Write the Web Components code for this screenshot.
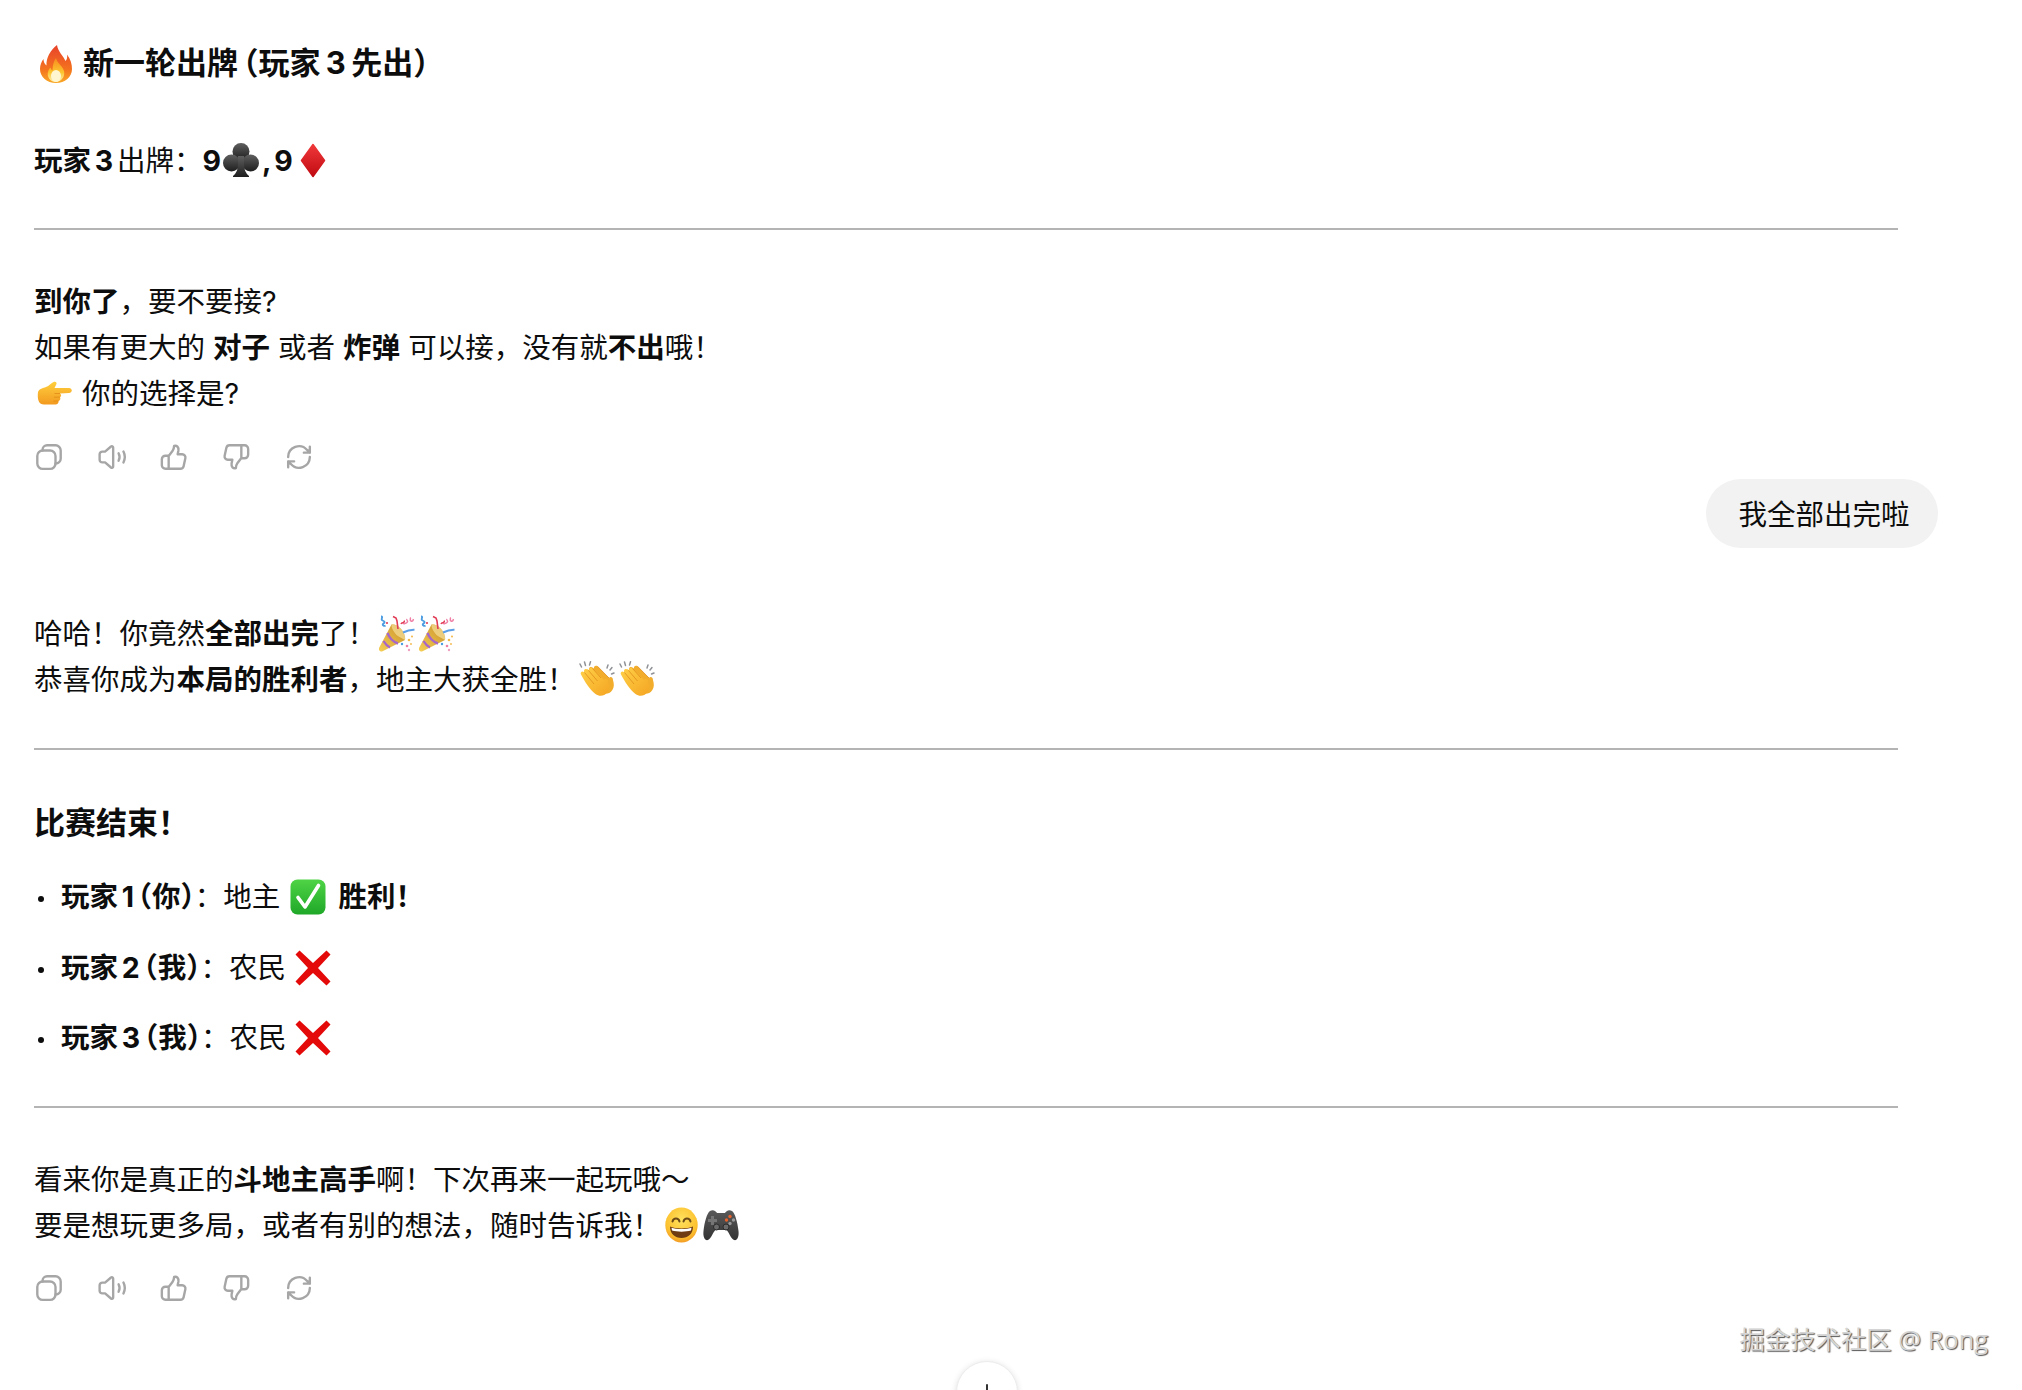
<!DOCTYPE html>
<html lang="zh">
<head>
<meta charset="utf-8">
<title>斗地主</title>
<style>
html, body { margin: 0; padding: 0; background: #fff; }
</style>
</head>
<body>
<chat-app>
  <chat-line kind="title" style="word-spacing:-2px"><emo-ji name="fire" w="32" h="38" ml="6" mr="11"></emo-ji>新一轮出牌<half-w style="margin-left:5px">（</half-w>玩家 3 先出<half-w>）</half-w></chat-line>
  <chat-line tight style="--mt:51px"><b>玩家 3 </b>出牌：<b>9</b><emo-ji name="club" ml="2" mr="3"></emo-ji><b>, 9 </b><emo-ji name="diamond" w="26" h="35" ml="3"></emo-ji></chat-line>
  <chat-rule style="--mt:45px"></chat-rule>
  <chat-line style="--mt:48px"><b>到你了</b>，要不要接?</chat-line>
  <chat-line>如果有更大的 <b>对子</b> 或者 <b>炸弹</b> 可以接，没有就<b>不出</b>哦！</chat-line>
  <chat-line><emo-ji name="point" w="36" h="24" ml="2" mr="10"></emo-ji>你的选择是?</chat-line>
  <action-bar style="--mt:26px"></action-bar>
  <user-bubble style="--mt:7px">我全部出完啦</user-bubble>
  <chat-line style="--mt:62px">哈哈！你竟然<b>全部出完</b>了！<emo-ji name="party" w="37" h="37" ml="2" mr="3"></emo-ji><emo-ji name="party" w="37" h="37"></emo-ji></chat-line>
  <chat-line>恭喜你成为<b>本局的胜利者</b>，地主大获全胜！<emo-ji name="clap" ml="2" mr="4"></emo-ji><emo-ji name="clap"></emo-ji></chat-line>
  <chat-rule style="--mt:46px"></chat-rule>
  <chat-line kind="title" style="--mt:50px">比赛结束！</chat-line>
  <chat-item style="--mt:28px"><b>玩家 1 <half-w>（</half-w>你<half-w>）</half-w></b>：地主 <emo-ji name="check" ml="5" mr="12"></emo-ji><b>胜利！</b></chat-item>
  <chat-item style="--mt:24.5px"><b>玩家 2 <half-w>（</half-w>我<half-w>）</half-w></b>：农民 <emo-ji name="cross" ml="4"></emo-ji></chat-item>
  <chat-item style="--mt:24.5px"><b>玩家 3 <half-w>（</half-w>我<half-w>）</half-w></b>：农民 <emo-ji name="cross" ml="4"></emo-ji></chat-item>
  <chat-rule style="--mt:45px"></chat-rule>
  <chat-line style="--mt:48px">看来你是真正的<b>斗地主高手</b>啊！下次再来一起玩哦～</chat-line>
  <chat-line>要是想玩更多局，或者有别的想法，随时告诉我！<emo-ji name="grin" w="33" h="36" ml="4" mr="5"></emo-ji><emo-ji name="pad" w="36" h="36"></emo-ji></chat-line>
  <action-bar style="--mt:25px"></action-bar>
  <scroll-button></scroll-button>
  <water-mark>掘金技术社区 @ Rong</water-mark>
</chat-app>

<script>
// emoji drawn by hand, no emoji font in the sandbox
const HAND = 'M3 13.500C1.800 11.500 4 9.500 6 11L6.500 11.500C5 9 7.500 7 9.500 8.500L11 9.500C10.500 7.500 12.500 6 14.500 7.300L26 19C27.500 17 30 18.500 30 21C31 25 31.500 28 29 31.500C26.500 35 21.500 36 17.500 33C11 28 6.500 20 3 13.500Z';
const EMOJI = {
  fire: `<svg viewBox="0 0 32 38"><defs>
      <linearGradient id="a" x1="0" y1="0" x2="0" y2="1"><stop offset="0" stop-color="#e8412a"/><stop offset=".65" stop-color="#f4741e"/><stop offset="1" stop-color="#f9a825"/></linearGradient>
      <linearGradient id="b" x1="0" y1="0" x2="0" y2="1"><stop offset="0" stop-color="#f78a1e"/><stop offset=".6" stop-color="#fcc52f"/><stop offset="1" stop-color="#fff3b0"/></linearGradient></defs>
      <path fill="url(#a)" d="M17 0C18 7 23 10 25.500 16C27 14.500 27.500 12 27 9.500C30.500 14 32 19 32 24C32 32 25 38 16 38C7 38 0 32 0 24C0 20 1.500 16.500 3.500 14C3.500 17 4.500 19 6.500 20.500C6 13 10.500 5 17 0Z"/>
      <path fill="url(#b)" d="M16 13C17 18 22.500 21 24 26C25.500 31.500 21 37 16 37C10.500 37 6.500 32 8 27C8.500 25 9.500 23.500 10.500 22.500C11 24 11.500 25 12.500 25.500C12.500 21 13.500 16.500 16 13Z"/>
      <ellipse cx="16" cy="31" rx="5" ry="6" fill="#fff6cf"/></svg>`,
  club: `<svg viewBox="0 0 36 36"><defs><linearGradient id="a" x1="0" y1="0" x2="0" y2="1"><stop offset="0" stop-color="#5f5f5f"/><stop offset="1" stop-color="#1e1e1e"/></linearGradient></defs>
      <g fill="url(#a)"><circle cx="18" cy="9.500" r="8.500"/><circle cx="8.500" cy="21" r="8.500"/><circle cx="27.500" cy="21" r="8.500"/><path d="M15 14h6v8q0 8 5 12v1H10v-1q5-4 5-12z"/></g></svg>`,
  diamond: `<svg viewBox="0 0 26 35"><defs><linearGradient id="a" x1="0" y1="0" x2="0" y2="1"><stop offset="0" stop-color="#f0383a"/><stop offset="1" stop-color="#c00b12"/></linearGradient></defs>
      <path fill="url(#a)" stroke="url(#a)" stroke-width="1.500" stroke-linejoin="round" d="M13 1.500L24.500 17.500L13 33.500L1.500 17.500Z"/></svg>`,
  point: `<svg viewBox="0 0 36 24"><defs><linearGradient id="a" x1="0" y1="0" x2="0" y2="1"><stop offset="0" stop-color="#ffcf3e"/><stop offset="1" stop-color="#f29a1f"/></linearGradient></defs>
      <path fill="url(#a)" d="M2 11C3 8 7 7 10 6C13 5 15 2 18 .8C20 .2 21.500 2 20 4C19.500 5 19 6 18.500 7L33 7C36.800 7.500 36.800 11.500 33 12L24 12.500C25.500 13.500 25.500 15.500 24 16C25 17.500 24 19.500 22.500 20C22.800 22 21.500 23.500 19.500 23.500L8 23.500C3 23.500 1 19 2 11Z"/>
      <path fill="none" stroke="#e08a18" stroke-width=".8" d="M18.500 12.500H24M18 16.200H24M17.500 20H22.500"/></svg>`,
  party: `<svg viewBox="0 0 37 37"><defs><linearGradient id="a" x1="0" y1="1" x2="1" y2="0"><stop offset="0" stop-color="#f6cf55"/><stop offset="1" stop-color="#c9912a"/></linearGradient></defs>
      <path fill="url(#a)" d="M1 33C.5 35.500 2 37 4 36.500L27 25C28 21 25 15 21 12C18.500 10 15.500 9 13.500 9.500Z"/>
      <path fill="#fff2b8" opacity=".55" d="M13.500 9.500C13 13 17 20 21.500 22L27 25C28 21 25 15 21 12C18.500 10 15.500 9 13.500 9.500Z"/>
      <path fill="none" stroke="#a667c9" stroke-width="2.400" d="M9.500 18C11 22 15 27 20 28.500M5.500 26C7 28.500 9 31 12 32.500"/>
      <path fill="none" stroke="#4a9be0" stroke-width="1.800" d="M3 1.500c3 0-1 3 1.500 4s3 1.500 .5 3.500c-1 1 1 2.500 2.500 1.500"/>
      <path fill="none" stroke="#e23b55" stroke-width="1.600" d="M15 1.500l3 1.500 1 3 1 8M23 9c1-2 2-1 2.500-1s0-2 1.500-2"/>
      <path fill="none" stroke="#ef7fa5" stroke-width="1.500" d="M29 4c-1 1 2 2 0 3.500s-3 .5-3 2M32 2.500c1.500 1 -1 2.500 1 3.500s2-1 2.500-2"/>
      <path fill="none" stroke="#5b9fe6" stroke-width="2" d="M25 17.500c4-2 7-3 11.500-2.800"/>
      <g><circle cx="9" cy="8" r="1.100" fill="#e23b55"/><circle cx="24" cy="29" r="1.200" fill="#4a9be0"/><circle cx="31" cy="25" r="1.300" fill="#f3b744"/><circle cx="34" cy="21.500" r="1" fill="#f3b744"/><circle cx="29" cy="31" r="1.300" fill="#ef7fa5"/><circle cx="33" cy="29" r=".9" fill="#f3b744"/><circle cx="31" cy="35" r="1.200" fill="#ef9fc0"/></g></svg>`,
  clap: `<svg viewBox="0 0 36 36"><defs><linearGradient id="a" x1="0" y1="0" x2="1" y2="1"><stop offset="0" stop-color="#ffd047"/><stop offset="1" stop-color="#f5a623"/></linearGradient></defs>
      <path fill="#f3ad2c" transform="translate(5 -2)" d="${HAND}"/>
      <path fill="none" stroke="#e08e1c" stroke-width=".8" transform="translate(5 -2)" d="M14.500 7.300L26 19"/>
      <path fill="url(#a)" d="${HAND}"/>
      <path fill="none" stroke="#e08e1c" stroke-width=".8" d="M6.500 11.500L16 23M10.500 9.500L19.500 20M14.500 7.500L23 17"/>
      <path fill="none" stroke="#8f9296" stroke-width="1.500" stroke-linecap="round" d="M3.500 6L2 3M7.500 4.500L6.500 1M11.500 4L12.500 .8M29 7L30 4M32 9L34 6.500M33.500 13L36 12"/></svg>`,
  check: `<svg viewBox="0 0 36 36"><defs><linearGradient id="a" x1="0" y1="0" x2="0" y2="1"><stop offset="0" stop-color="#4fd446"/><stop offset="1" stop-color="#1fa728"/></linearGradient></defs>
      <rect x=".5" y=".5" width="35" height="35" rx="7" fill="url(#a)"/>
      <path d="M8 18.500L15 28L28.500 6.500" fill="none" stroke="#fff" stroke-width="3.600" stroke-linejoin="round" stroke-linecap="round"/></svg>`,
  cross: `<svg viewBox="0 0 36 36"><path fill="#e40a0a" d="M4.500 .5L18 13L31.500 .5L35.500 4.500L23 18L35.500 31.500L31.500 35.500L18 23L4.500 35.500L.5 31.500L13 18L.5 4.500Z"/></svg>`,
  grin: `<svg viewBox="0 0 33 36"><defs><radialGradient id="a" cx=".5" cy=".35" r=".7"><stop offset="0" stop-color="#ffe25e"/><stop offset=".7" stop-color="#fcc12f"/><stop offset="1" stop-color="#f09020"/></radialGradient></defs>
      <ellipse cx="16.500" cy="18" rx="16.200" ry="17.500" fill="url(#a)"/>
      <path d="M7.500 14.500c1-4 6-4 7 0M18.500 14.500c1-4 6-4 7 0" fill="none" stroke="#6e4a16" stroke-width="2" stroke-linecap="round"/>
      <path d="M5 19.500C10 22 23 22 28 19.500C28 27 23 31 16.500 31C10 31 5 27 5 19.500Z" fill="#6e3b12"/>
      <path d="M6.500 20.800C11 22.500 22 22.500 26.500 20.800L26 23.500C21 25 12 25 7 23.500Z" fill="#fff"/></svg>`,
  pad: `<svg viewBox="0 0 36 36"><defs><linearGradient id="a" x1="0" y1="0" x2="0" y2="1"><stop offset="0" stop-color="#5a5a5a"/><stop offset="1" stop-color="#333"/></linearGradient></defs>
      <path fill="url(#a)" d="M7 4C10 2 13 4 14 6H22C23 4 26 2 29 4C32 6 34.500 15 35.500 24C36.200 30 34 34 31 33C28 32 26 25 23.500 23H12.500C10 25 8 32 5 33C2 34 -.2 30 .5 24C1.500 15 4 6 7 4Z"/>
      <path fill="#7c7c7c" d="M8 9h3v3h3v3h-3v3H8v-3H5v-3h3z" opacity=".85"/>
      <circle cx="27" cy="9.500" r="1.700" fill="#e8622c"/><circle cx="23.500" cy="13" r="1.700" fill="#e8622c"/><circle cx="30.500" cy="13" r="1.700" fill="#999"/><circle cx="27" cy="16.500" r="1.700" fill="#999"/>
      <circle cx="13.500" cy="20" r="3" fill="#6b6b6b" stroke="#2b2b2b"/><circle cx="23" cy="20" r="3" fill="#6b6b6b" stroke="#2b2b2b"/></svg>`
};

const ICONS = [
  `<rect x="1.200" y="6" width="16.800" height="17" rx="5"/><path d="M6 6V5.500A4.300 4.300 0 0 1 10.300 1.200H18A4.800 4.800 0 0 1 22.800 6V13.500A4.500 4.500 0 0 1 18 18"/>`,
  `<path d="M1.500 9.500A2.500 2.500 0 0 1 4 7H6.500L12 2.300A1.200 1.200 0 0 1 14 3.200V20.800A1.200 1.200 0 0 1 12 21.700L6.500 17H4A2.500 2.500 0 0 1 1.500 14.500Z"/><path d="M19 8.500C20.200 10.800 20.200 13.200 19 15.500M23.500 7C25 10 25 14 23.500 17"/>`,
  `<path d="M8 11L11.500 6.500C12.500 5 13 3.500 13 1.800C15.500 1 17.500 3 17 6L16.300 9.500H20.500A3 3 0 0 1 23.400 13.200L21.800 20.500A3 3 0 0 1 18.900 22.800H5A3.300 3.300 0 0 1 1.700 19.500V14A3.300 3.300 0 0 1 5 10.800H7.500A1 1 0 0 1 8 11.500V22.800"/>`,
  `<path d="M16 13L12.500 17.500C11.500 19 11 20.500 11 22.200C8.500 23 6.500 21 7 18L7.700 14.500H3.500A3 3 0 0 1 .6 10.800L2.200 3.500A3 3 0 0 1 5.100 1.200H19A3.300 3.300 0 0 1 22.300 4.500V10A3.300 3.300 0 0 1 19 13.200H16.500A1 1 0 0 1 16 12.500V1.200"/>`,
  `<path d="M2 12A10 10 0 0 1 19.500 5.500L22 8M22 2.500V8H16.500M22 12A10 10 0 0 1 4.500 18.500L2 16M2 21.500V16H7.500"/>`
];

function define(tag, css, html) {
  customElements.define(tag, class extends HTMLElement {
    constructor() {
      super();
      this.attachShadow({ mode: 'open' }).innerHTML = `<style>${css}</style>${html}`;
    }
  });
}

define('chat-app', `
  :host { display: block; position: relative; box-sizing: border-box; height: 1390px; overflow: hidden;
    padding: 40px 84px 0 34px; background: #fff; color: #0d0d0d;
    font: 400 28.5px/46px Inter, "Noto Sans CJK SC", sans-serif; }
`, `<slot></slot>`);

class ChatLine extends HTMLElement {
  constructor() {
    super();
    const title = this.getAttribute('kind') === 'title';
    const tight = this.hasAttribute('tight');
    this.attachShadow({ mode: 'open' }).innerHTML = `<style>
      :host { display: block; margin-top: var(--mt, 0); white-space: pre-wrap; height: 46px;
        ${title ? 'font-size: 31px; font-weight: 700;' : 'line-height: 48px; --et: -3px;'}
        ${tight ? 'word-spacing: -3px;' : ''} }
    </style><slot></slot>`;
  }
}
customElements.define('chat-line', ChatLine);

define('half-w', `
  :host { font-feature-settings: "halt"; }
`, `<slot></slot>`);

define('chat-item', `
  :host { display: block; position: relative; margin-top: var(--mt, 0); padding-left: 27px; height: 46px; white-space: pre-wrap; word-spacing: -3px; }
  .dot { position: absolute; left: 4px; top: 22px; width: 6px; height: 6px; border-radius: 50%; background: #0d0d0d; }
`, `<span class="dot"></span><slot></slot>`);

define('chat-rule', `
  :host { display: block; margin: var(--mt, 0) 40px 0 0; height: 2px; background: #b4b4b4; }
`, ``);

define('action-bar', `
  :host { display: flex; gap: 36px; margin-top: var(--mt, 0); padding-left: 2px; height: 30px; align-items: center; }
  svg { width: 26px; height: 26px; fill: none; stroke: #a6a6a6; stroke-width: 2.2; stroke-linecap: round; stroke-linejoin: round; overflow: visible; }
  svg:nth-of-type(4) { margin-left: 2px; }
`, ICONS.map(p => `<svg viewBox="0 0 24 24">${p}</svg>`).join(''));

define('user-bubble', `
  :host { display: block; width: fit-content; margin: var(--mt, 0) 0 0 auto; padding: 0 28.500px 0 32.500px; height: 69px; line-height: 71px;
    border-radius: 34.500px; background: #f2f2f2; }
`, `<slot></slot>`);

define('scroll-button', `
  :host { position: absolute; left: 956px; top: 1361px; width: 62px; height: 62px; box-sizing: border-box; border-radius: 50%;
    background: #fff; border: 1px solid #ececec; box-shadow: 0 1px 6px rgba(0,0,0,.12); }
  svg { position: absolute; left: 18px; top: 21px; width: 24px; height: 24px; fill: none; stroke: #333; stroke-width: 2; stroke-linecap: round; stroke-linejoin: round; }
`, `<svg viewBox="0 0 24 24"><path d="M12 2V22M5 15L12 22L19 15"/></svg>`);

define('water-mark', `
  :host { position: absolute; right: 34px; top: 1321px; font-size: 25.400px; line-height: 36px; color: #d4d4d4;
    text-shadow: 1px 1px 1px #555; white-space: nowrap; font-family: "Open Sans", "Noto Sans CJK SC", sans-serif; }
`, `<slot></slot>`);

class EmoJi extends HTMLElement {
  constructor() {
    super();
    const a = n => this.getAttribute(n);
    const w = a('w') || 36, h = a('h') || 36;
    this.attachShadow({ mode: 'open' }).innerHTML = `<style>
      :host { display: inline-block; vertical-align: middle; position: relative; top: var(--et, -2px);
        width: ${w}px; height: ${h}px; margin: 0 ${a('mr') || 0}px 0 ${a('ml') || 0}px; }
      svg { display: block; width: 100%; height: 100%; overflow: visible; }
    </style>${EMOJI[a('name')]}`;
  }
}
customElements.define('emo-ji', EmoJi);
</script>
</body>
</html>
